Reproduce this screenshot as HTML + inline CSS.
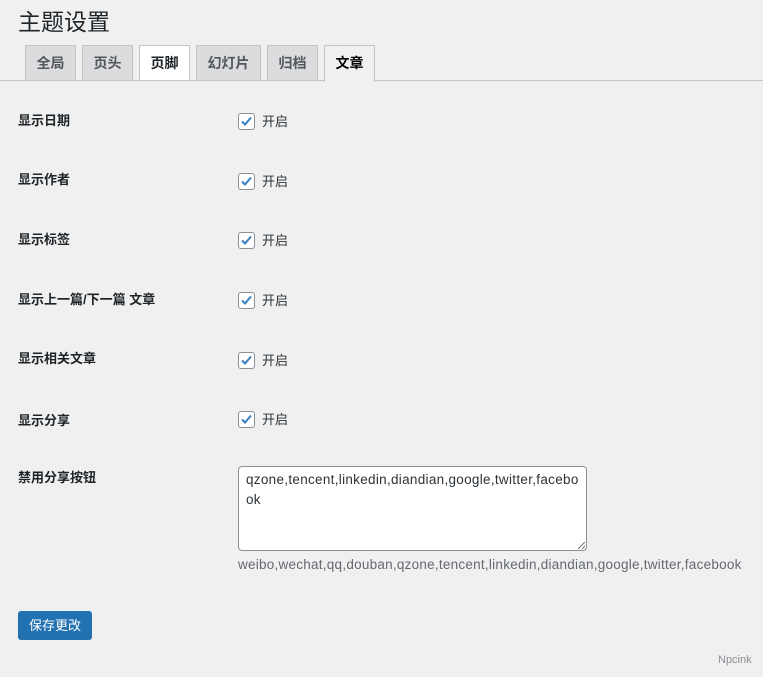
<!DOCTYPE html>
<html><head><meta charset="utf-8"><style>
body{margin:0;width:763px;height:677px;background:#f0f0f1;font-family:"Liberation Sans","Noto Sans CJK SC",sans-serif;color:#1d2327;position:relative;overflow:hidden}
.a{position:absolute}
h1{position:absolute;left:18px;top:3px;margin:0;font-size:23px;font-weight:400;color:#1d2327}
.tab{position:absolute;top:45px;height:34px;border:1px solid #c3c4c7;border-bottom:none;background:#dcdcde;font-size:14px;font-weight:600;color:#50575e;text-align:center;line-height:34px}
.line{position:absolute;left:0;top:80px;width:763px;border-top:1px solid #c3c4c7}
.lbl{position:absolute;left:18px;font-size:13px;font-weight:600;color:#1d2327}
.cb{position:absolute;left:238px;width:15px;height:15px;border:1px solid #8c8f94;border-radius:3px;background:#fff}
.cb svg{position:absolute;left:0;top:0}
.on{position:absolute;left:262px;font-size:13px;color:#2c3338}
</style></head><body>
<h1>主题设置</h1>
<div class="line"></div>
<div class="tab" style="left:25px;width:49px">全局</div>
<div class="tab" style="left:82px;width:49px">页头</div>
<div class="tab" style="left:139px;width:49px;background:#fff;color:#1d2327">页脚</div>
<div class="tab" style="left:196px;width:63px">幻灯片</div>
<div class="tab" style="left:267px;width:49px">归档</div>
<div class="tab" style="left:324px;width:49px;height:36px;background:#f0f0f1;color:#000">文章</div>

<div class="lbl" style="top:110px">显示日期</div>
<div class="lbl" style="top:169px">显示作者</div>
<div class="lbl" style="top:229px">显示标签</div>
<div class="lbl" style="top:289px">显示上一篇/下一篇 文章</div>
<div class="lbl" style="top:348px">显示相关文章</div>
<div class="lbl" style="top:410px">显示分享</div>
<div class="lbl" style="top:467px">禁用分享按钮</div>

<div class="cb" style="top:113px"><svg width="15" height="15" viewBox="0 0 15 15"><path d="M3 7.5l3 3 6-7" fill="none" stroke="#3582c4" stroke-width="2"/></svg></div><div class="on" style="top:111px">开启</div>
<div class="cb" style="top:173px"><svg width="15" height="15" viewBox="0 0 15 15"><path d="M3 7.5l3 3 6-7" fill="none" stroke="#3582c4" stroke-width="2"/></svg></div><div class="on" style="top:171px">开启</div>
<div class="cb" style="top:232px"><svg width="15" height="15" viewBox="0 0 15 15"><path d="M3 7.5l3 3 6-7" fill="none" stroke="#3582c4" stroke-width="2"/></svg></div><div class="on" style="top:230px">开启</div>
<div class="cb" style="top:292px"><svg width="15" height="15" viewBox="0 0 15 15"><path d="M3 7.5l3 3 6-7" fill="none" stroke="#3582c4" stroke-width="2"/></svg></div><div class="on" style="top:290px">开启</div>
<div class="cb" style="top:352px"><svg width="15" height="15" viewBox="0 0 15 15"><path d="M3 7.5l3 3 6-7" fill="none" stroke="#3582c4" stroke-width="2"/></svg></div><div class="on" style="top:350px">开启</div>
<div class="cb" style="top:411px"><svg width="15" height="15" viewBox="0 0 15 15"><path d="M3 7.5l3 3 6-7" fill="none" stroke="#3582c4" stroke-width="2"/></svg></div><div class="on" style="top:409px">开启</div>

<div class="a" style="left:238px;top:466px;width:347px;height:83px;border:1px solid #8c8f94;border-radius:4px;background:#fff;font-size:13.5px;color:#2c3338;line-height:20px;padding:0">
<div style="position:absolute;left:7px;top:3px;width:335px;word-break:break-all;letter-spacing:0.3px">qzone,tencent,linkedin,diandian,google,twitter,facebo<br>ok</div>
<svg class="a" style="right:1px;bottom:1px" width="8" height="8"><path d="M8 1L1 8M8 5L5 8" stroke="#777" stroke-width="1"/></svg>
</div>
<div class="a" style="left:238px;top:557px;font-size:13.5px;color:#646970;letter-spacing:0.25px">weibo,wechat,qq,douban,qzone,tencent,linkedin,diandian,google,twitter,facebook</div>

<div class="a" style="left:18px;top:611px;width:74px;height:29px;background:#2271b1;border-radius:3px;color:#fff;font-size:13px;line-height:29px;text-align:center">保存更改</div>
<div class="a" style="left:718px;top:654px;font-size:11px;color:#8c8f94">Npcink</div>
</body></html>
